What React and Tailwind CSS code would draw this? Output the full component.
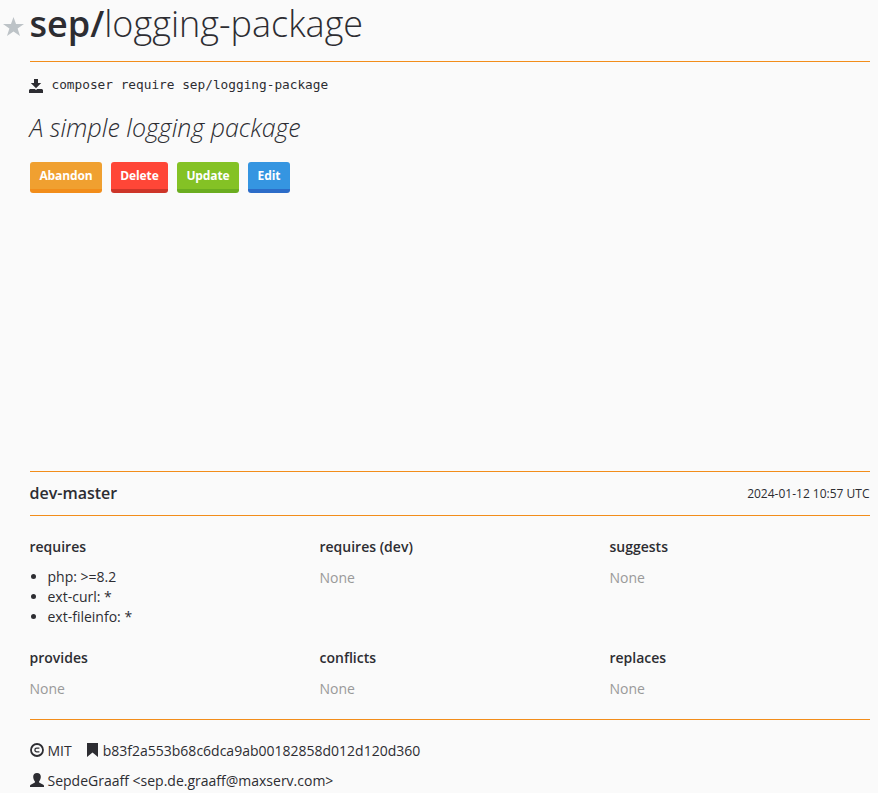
const Section = ({ title, items }) => (
  <div>
    <h3 className="-ml-[0.5px] text-[14px] leading-[20px] font-semibold">{title}</h3>
    {items ? (
      <ul className="mt-[10px] list-disc pl-[17.5px]">
        {items.map((i) => (
          <li key={i}>{i}</li>
        ))}
      </ul>
    ) : (
      <p className="mt-[11px] -ml-[0.5px] text-[#999]">None</p>
    )}
  </div>
);

export default function App() {
  return (
    <div className="min-h-[793px] bg-[#fafafa] pl-[30px] pr-[8px] font-['Open_Sans',sans-serif] text-[14px] leading-[20px] text-[#2d2d32]">
      <h1 className="flex h-[62px] border-b border-[#f28d1a] text-[36px] leading-[48px] font-light">
        <svg viewBox="0 0 20 19.200" className="-ml-[27px] mr-[6px] mt-[17px] h-[19px] w-[21px] shrink-0" fill="#bdc3c7" preserveAspectRatio="none">
          <path d="M10 0l2.400 7.100H20l-6.100 4.600 2.300 7.500L10 14.700l-6.200 4.500 2.300-7.500L0 7.100h7.600z" />
        </svg>
        <span className="-ml-[0.5px] h-[49px]"><b className="font-semibold">sep/</b>logging-package</span>
      </h1>
      <p className="mt-[12px] flex h-[22px] items-center font-['DejaVu_Sans_Mono',monospace] text-[12.78px]">
        <svg viewBox="0 0 14 14" className="-ml-[1px] mr-[8.5px] mt-[2px] h-[14px] w-[14px]" fill="#2d2d32">
          <path d="M5 0h4v4h3.200L7 9.200 1.800 4H5zM1 10h4.800L7 11l1.200-1H13l1 1v3H0v-3z" />
        </svg>
        composer require sep/logging-package
      </p>
      <p className="mt-[15px] -ml-[0.5px] text-[25px] leading-[32px] font-light italic">A simple logging package</p>
      <div className="mt-[19px] flex gap-[9px] text-[12px] leading-[27px] font-bold tracking-[-0.1px] text-white">
        <button className="h-[31px] w-[72px] rounded-[3px] border-b-4 border-[#f28d1a] bg-[#f0a030]">Abandon</button>
        <button className="h-[31px] w-[57px] rounded-[3px] border-b-4 border-[#cd3529] bg-[#ff4637]">Delete</button>
        <button className="h-[31px] w-[62px] rounded-[3px] border-b-4 border-[#6bad20] bg-[#84c225]">Update</button>
        <button className="h-[31px] w-[42px] rounded-[3px] border-b-4 border-[#2c6cc8] bg-[#3595e1]">Edit</button>
      </div>
      <div className="mt-[278px] flex h-[45px] items-center justify-between border-y border-[#f28d1a]">
        <b className="-ml-[0.5px] pb-[2px] text-[16px] font-semibold">dev-master</b>
        <span className="mr-[0.5px] text-[12px]">2024-01-12 10:57 UTC</span>
      </div>
      <div className="grid h-[204px] grid-cols-[290px_290px_1fr] grid-rows-[111px_1fr] border-b border-[#f28d1a] pt-[21px]">
        <Section title="requires" items={["php: >=8.2", "ext-curl: *", "ext-fileinfo: *"]} />
        <Section title="requires (dev)" />
        <Section title="suggests" />
        <Section title="provides" />
        <Section title="conflicts" />
        <Section title="replaces" />
      </div>
      <p className="mt-[21px] flex items-center">
        <svg viewBox="0 0 14 14" className="-ml-[0.5px] mr-[4px] mb-[2px] h-[14px] w-[14px]" fill="none" stroke="#2d2d32" strokeWidth="1.8">
          <circle cx="7" cy="7" r="6" />
          <path d="M9.4 5.2H6.700A1.800 1.800 0 0 0 6.700 8.800H9.400" strokeWidth="1.3" />
        </svg>
        MIT
        <svg viewBox="0 0 11 14" className="ml-[15px] mr-[5px] mb-[2px] h-[14px] w-[11px]" fill="#2d2d32">
          <path d="M0 0h11v14L5.500 9.500 0 14z" />
        </svg>
        b83f2a553b68c6dca9ab00182858d012d120d360
      </p>
      <p className="mt-[10px] flex items-center">
        <svg viewBox="0 0 14 14" className="-ml-[0.5px] mr-[4px] mb-[2px] h-[14px] w-[14px]" fill="#2d2d32">
          <path d="M7 0c2.500 0 3.800 1.500 3.800 3.800 0 1.900-.7 3.500-1.700 4.500v1.300l4.200 2.200c.5.300.7.700.7 1.200v1H0v-1c0-.5.200-.9.700-1.200l4.200-2.200V8.300C3.900 7.300 3.200 5.700 3.200 3.800 3.200 1.500 4.500 0 7 0z" />
        </svg>
        SepdeGraaff &lt;sep.de.graaff@maxserv.com&gt;
      </p>
    </div>
  );
}
